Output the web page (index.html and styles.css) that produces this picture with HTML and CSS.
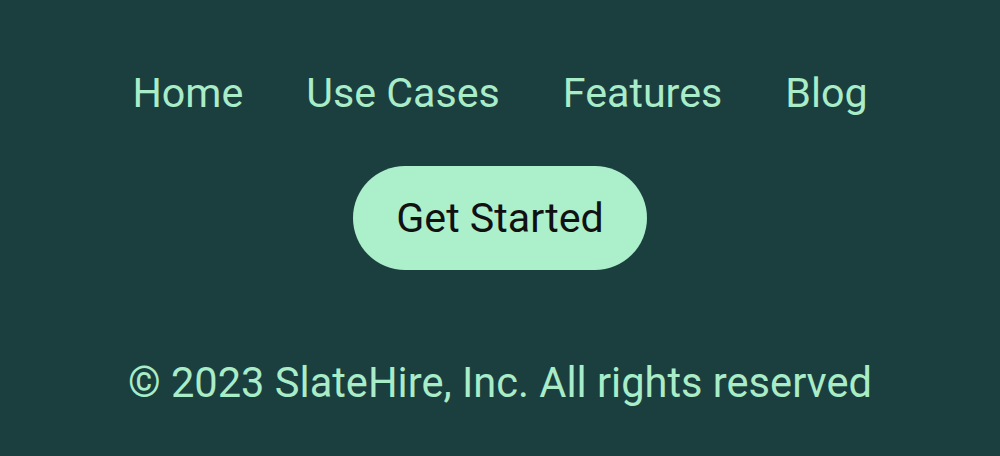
FILE: index.html
```html
<!DOCTYPE html>
<html lang="en">
<head>
<meta charset="utf-8">
<title>SlateHire Footer</title>
<link rel="stylesheet" href="styles.css">
</head>
<body>
<footer class="footer">
  <nav class="nav">
    <a class="nav-link" href="#">Home</a>
    <a class="nav-link" href="#">Use Cases</a>
    <a class="nav-link" href="#">Features</a>
    <a class="nav-link" href="#">Blog</a>
  </nav>
  <a class="cta" href="#">Get Started</a>
  <p class="copyright">© 2023 SlateHire, Inc. All rights reserved</p>
</footer>
</body>
</html>
```

FILE: styles.css
```css
html, body {
  margin: 0;
  padding: 0;
  background: #1b3e3e;
  height: 100%;
}
body {
  font-family: Roboto, "Liberation Sans", sans-serif;
}
.footer {
  display: flex;
  flex-direction: column;
  align-items: center;
  padding-top: 69px;
}
.nav {
  display: flex;
  gap: 63px;
  height: 48px;
  align-items: center;
}
.nav-link {
  color: #a8ecc8;
  text-decoration: none;
  font-size: 41.2px;
  line-height: 48px;
}
.cta {
  margin-top: 49px;
  height: 104px;
  line-height: 104px;
  padding: 0 43px;
  border-radius: 52px;
  background: #abefcb;
  color: #111;
  text-decoration: none;
  font-size: 41.2px;
}
.copyright {
  margin: 89px 0 0;
  color: #a8ecc8;
  font-size: 41.6px;
  line-height: 48px;
}
```
